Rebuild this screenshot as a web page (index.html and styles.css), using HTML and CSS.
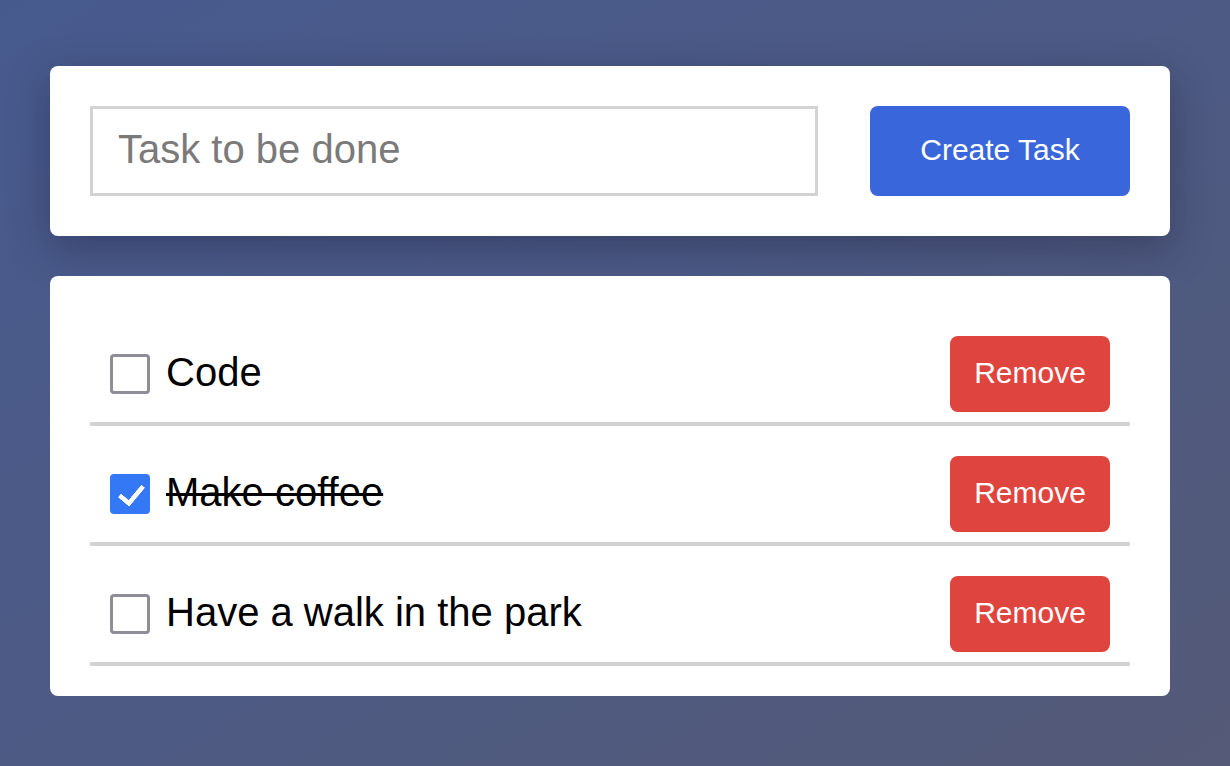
FILE: index.html
```html
<!DOCTYPE html>
<html lang="en">
<head>
<meta charset="utf-8">
<title>Tasks</title>
<link rel="stylesheet" href="styles.css">
</head>
<body>
<main class="app">
  <section class="card create-card">
    <input class="task-input" type="text" placeholder="Task to be done">
    <button class="btn btn-create">Create Task</button>
  </section>
  <section class="card list-card">
    <div class="task-row">
      <label class="task-label">
        <input class="task-check" type="checkbox">
        <span class="task-text">Code</span>
      </label>
      <button class="btn btn-remove">Remove</button>
    </div>
    <div class="task-row">
      <label class="task-label">
        <input class="task-check" type="checkbox" checked>
        <span class="task-text done">Make coffee</span>
      </label>
      <button class="btn btn-remove">Remove</button>
    </div>
    <div class="task-row">
      <label class="task-label">
        <input class="task-check" type="checkbox">
        <span class="task-text">Have a walk in the park</span>
      </label>
      <button class="btn btn-remove">Remove</button>
    </div>
  </section>
</main>
</body>
</html>
```
FILE: styles.css
```css
* { box-sizing: border-box; }
html, body { height: 100%; }
body {
  margin: 0;
  font-family: "Liberation Sans", Arial, sans-serif;
  background: linear-gradient(to bottom right, #475a8e 0%, #4d5a84 50%, #545a77 100%);
  color: #000;
}
.app {
  padding: 66px 60px 50px 50px;
  display: flex;
  flex-direction: column;
  gap: 40px;
}
.card {
  background: #fff;
  border-radius: 8px;
  width: 1120px;
}
.create-card {
  padding: 40px;
  display: flex;
  align-items: center;
  gap: 52px;
  box-shadow: 0 12px 40px rgba(20, 20, 50, 0.35);
}
.task-input {
  width: 728px;
  height: 90px;
  border: 3px solid #d3d3d3;
  padding: 0 24px 4px 25px;
  font-family: inherit;
  font-size: 40px;
  color: #000;
  outline: none;
  border-radius: 0;
}
.task-input::placeholder { color: #7a7a7a; }
.btn {
  border: none;
  color: #fff;
  font-family: inherit;
  font-size: 30px;
  border-radius: 8px;
  cursor: pointer;
  padding: 0 0 3px;
}
.btn-create {
  width: 260px;
  height: 90px;
  background: #3a66db;
}
.list-card {
  padding: 30px 40px;
}
.task-row {
  display: flex;
  align-items: center;
  justify-content: space-between;
  padding: 30px 20px 10px 20px;
  border-bottom: 4px solid #d3d3d3;
}
.task-label {
  display: flex;
  align-items: center;
  gap: 16px;
}
.task-check {
  appearance: none;
  -webkit-appearance: none;
  margin: 0;
  width: 40px;
  height: 40px;
  border: 3px solid #8e8d98;
  border-radius: 4px;
  background: #fff;
  position: relative;
}
.task-check:checked {
  background: #3478f6;
  border-color: #3478f6;
}
.task-check:checked::after {
  content: "";
  position: absolute;
  left: 11px;
  top: 3px;
  width: 10px;
  height: 20px;
  border-right: 5px solid #fff;
  border-bottom: 5px solid #fff;
  border-radius: 1px;
  transform: rotate(40deg);
}
.task-text {
  font-size: 40px;
  line-height: 46px;
  padding-bottom: 4px;
}
.task-text.done { text-decoration: line-through; text-decoration-thickness: 3px; }
.btn-remove {
  width: 160px;
  height: 76px;
  background: #df453e;
}
```
